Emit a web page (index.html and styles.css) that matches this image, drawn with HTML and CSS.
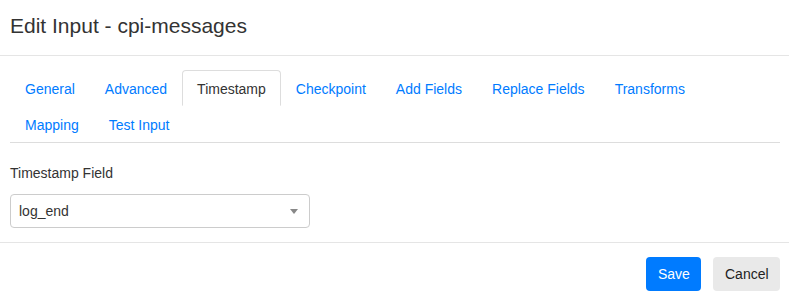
FILE: index.html
```html
<!DOCTYPE html>
<html>
<head>
<meta charset="utf-8">
<link rel="stylesheet" href="styles.css">
</head>
<body>
<div class="modal">
  <div class="modal-header">
    <h4 class="modal-title">Edit Input - cpi-messages</h4>
  </div>
  <div class="modal-body">
    <ul class="nav-tabs">
      <li><a href="#">General</a></li>
      <li><a href="#">Advanced</a></li>
      <li class="active"><a href="#">Timestamp</a></li>
      <li><a href="#">Checkpoint</a></li>
      <li><a href="#">Add Fields</a></li>
      <li><a href="#">Replace Fields</a></li>
      <li><a href="#">Transforms</a></li>
      <li><a href="#">Mapping</a></li>
      <li><a href="#">Test Input</a></li>
    </ul>
    <div class="tab-content">
      <label class="field-label">Timestamp Field</label>
      <div class="select">
        <span class="select-value">log_end</span>
        <span class="caret"></span>
      </div>
    </div>
  </div>
  <div class="modal-footer">
    <button class="btn btn-primary">Save</button>
    <button class="btn btn-default">Cancel</button>
  </div>
</div>
</body>
</html>
```
FILE: styles.css
```css
* { box-sizing: border-box; }
html, body { margin: 0; padding: 0; background: #fff; }
body {
  font-family: "Liberation Sans", Arial, Helvetica, sans-serif;
  font-size: 14px;
  color: #333;
  width: 789px;
  height: 298px;
  overflow: hidden;
}
.modal-header {
  height: 56px;
  padding: 13px 10px 0;
  border-bottom: 1px solid #e5e5e5;
}
.modal-title {
  margin: 0;
  font-size: 21px;
  font-weight: normal;
  line-height: 26px;
  color: #333;
}
.modal-body {
  padding: 14px 9px 14px 10px;
  border-bottom: 1px solid #e5e5e5;
}
.nav-tabs {
  list-style: none;
  margin: 0;
  padding: 0;
  display: flex;
  flex-wrap: wrap;
  border-bottom: 1px solid #ddd;
}
.nav-tabs li { display: block; }
.nav-tabs a {
  display: block;
  height: 36px;
  line-height: 16px;
  padding: 10px 14px;
  color: #007bff;
  text-decoration: none;
  border: 1px solid transparent;
  border-radius: 4px 4px 0 0;
}
.nav-tabs .active a {
  color: #333;
  border-color: #ddd;
  border-bottom-color: #fff;
}
.tab-content { padding-top: 20px; }
.field-label {
  display: block;
  line-height: 20px;
  margin-bottom: 11px;
}
.select {
  width: 300px;
  height: 34px;
  border: 1px solid #ccc;
  border-radius: 4px;
  display: flex;
  align-items: center;
  justify-content: space-between;
  padding: 0 11px 0 8px;
  color: #333;
}
.caret {
  width: 0;
  height: 0;
  border-left: 4px solid transparent;
  border-right: 4px solid transparent;
  border-top: 5px solid #888;
}
.modal-footer {
  display: flex;
  justify-content: flex-end;
  gap: 12px;
  padding: 14px 9px 0 10px;
}
.btn {
  font-family: inherit;
  font-size: 14px;
  height: 34px;
  border: 0;
  border-radius: 4px;
  padding: 0 12px;
  line-height: 34px;
  cursor: pointer;
}
.btn-primary { background: #007bff; color: #fff; width: 55px; }
.btn-default { background: #e9e9e9; color: #222; width: 67px; }
```
